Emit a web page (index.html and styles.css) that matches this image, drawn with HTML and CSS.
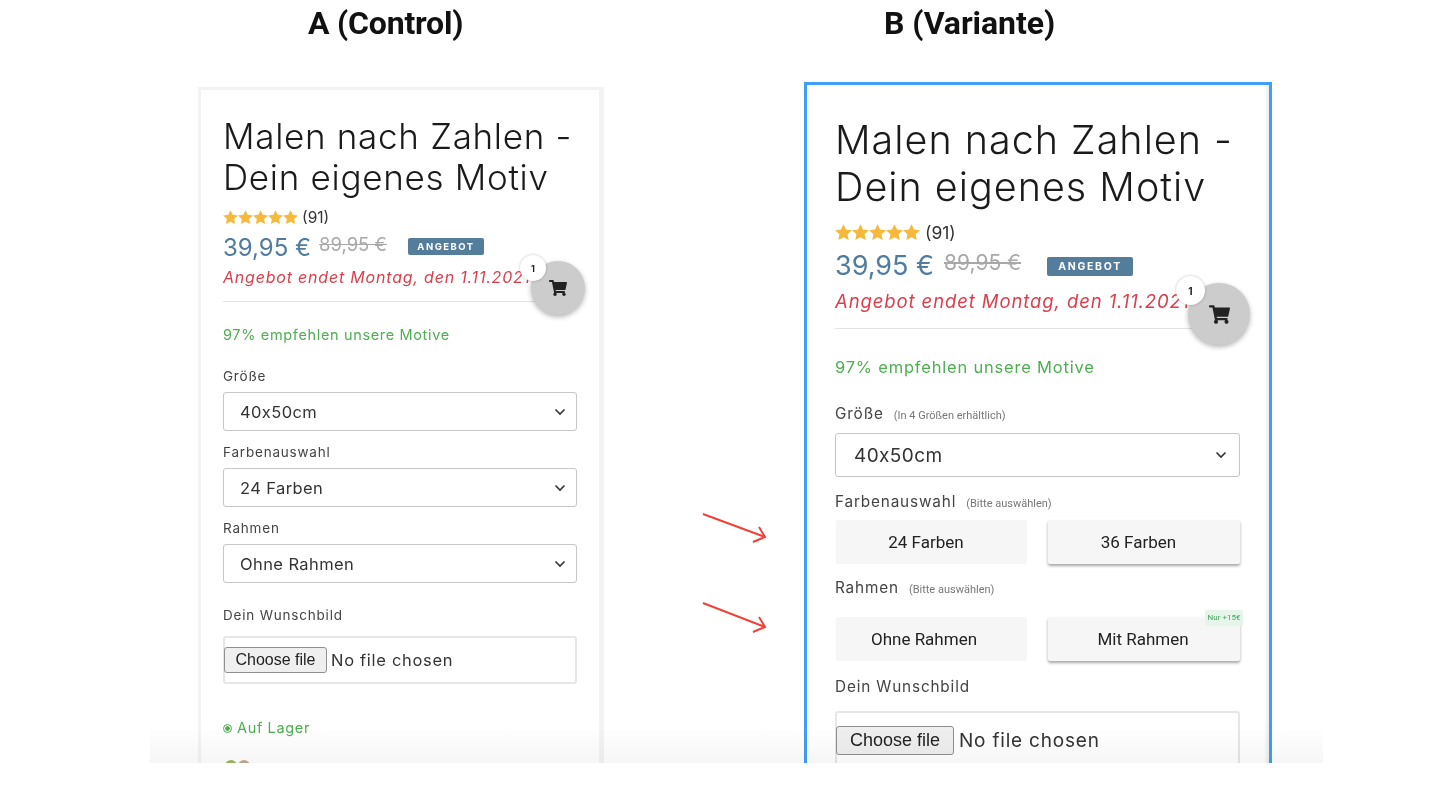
FILE: index.html
```html
<!DOCTYPE html>
<html lang="de">
<head>
    <meta charset="UTF-8">
    <meta name="viewport" content="width=device-width, initial-scale=1.0">
    <title>A/B Test - Malen nach Zahlen</title>
    <link rel="stylesheet" href="styles.css">
</head>
<body>
    <svg class="defs" width="0" height="0" aria-hidden="true">
        <symbol id="star" viewBox="0 0 24 24">
            <path d="M12 .5l3.600 7.200 8.200 1.100-6 5.600 1.500 8.100L12 18.600l-7.300 3.900 1.500-8.100-6-5.600 8.200-1.100z"/>
        </symbol>
        <symbol id="cart" viewBox="0 0 576 512">
            <path d="M528.12 301.319l47.273-208C578.806 78.301 567.391 64 551.99 64H159.208l-9.166-44.81C147.758 8.021 137.93 0 126.529 0H24C10.745 0 0 10.745 0 24v16c0 13.255 10.745 24 24 24h69.883l70.248 343.435C147.325 417.1 136 435.222 136 456c0 30.928 25.072 56 56 56s56-25.072 56-56c0-15.674-6.447-29.835-16.824-40h209.647C430.447 426.165 424 440.326 424 456c0 30.928 25.072 56 56 56s56-25.072 56-56c0-22.172-12.888-41.332-31.579-50.405l5.517-24.276c3.413-15.018-8.002-29.319-23.403-29.319H218.117l-6.545-32h293.145c11.206 0 20.92-7.754 23.403-18.681z"/>
        </symbol>
        <symbol id="chevron" viewBox="0 0 12 8">
            <path d="M1.500 1.500L6 6l4.500-4.500" fill="none" stroke="#333" stroke-width="1.600"/>
        </symbol>
    </svg>

    <main class="board">
        <header class="titles">
            <h2 class="title title-a">A (Control)</h2>
            <h2 class="title title-b">B (Variante)</h2>
        </header>

        <div class="columns">
            <!-- Control -->
            <section class="panel panel-a">
                <h1>Malen nach Zahlen - Dein eigenes Motiv</h1>
                <div class="rating">
                    <span class="stars">
                        <svg><use href="#star"/></svg><svg><use href="#star"/></svg><svg><use href="#star"/></svg><svg><use href="#star"/></svg><svg><use href="#star"/></svg>
                    </span>
                    <span class="count">(91)</span>
                </div>
                <div class="price-row">
                    <span class="price">39,95 €</span>
                    <span class="old-price">89,95 €</span>
                    <span class="badge">ANGEBOT</span>
                </div>
                <p class="offer">Angebot endet Montag, den 1.11.2021</p>
                <hr>
                <p class="recommend">97% empfehlen unsere Motive</p>

                <label class="field-label first-label">Größe</label>
                <div class="select-wrap">
                    <select><option>40x50cm</option></select>
                    <svg class="chevron"><use href="#chevron"/></svg>
                </div>
                <label class="field-label">Farbenauswahl</label>
                <div class="select-wrap">
                    <select><option>24 Farben</option></select>
                    <svg class="chevron"><use href="#chevron"/></svg>
                </div>
                <label class="field-label">Rahmen</label>
                <div class="select-wrap">
                    <select><option>Ohne Rahmen</option></select>
                    <svg class="chevron"><use href="#chevron"/></svg>
                </div>
                <label class="field-label upload-label">Dein Wunschbild</label>
                <div class="file-box">
                    <button type="button" class="file-btn">Choose file</button>
                    <span class="file-name">No file chosen</span>
                </div>

                <p class="stock"><span class="stock-dot"></span>Auf Lager</p>
                <div class="seals"><span class="seal seal-green"></span><span class="seal seal-brown"></span></div>

                <div class="fab">
                    <svg><use href="#cart"/></svg>
                    <span class="fab-count">1</span>
                </div>
            </section>

            <!-- Variante -->
            <section class="panel panel-b">
                <h1>Malen nach Zahlen - Dein eigenes Motiv</h1>
                <div class="rating">
                    <span class="stars">
                        <svg><use href="#star"/></svg><svg><use href="#star"/></svg><svg><use href="#star"/></svg><svg><use href="#star"/></svg><svg><use href="#star"/></svg>
                    </span>
                    <span class="count">(91)</span>
                </div>
                <div class="price-row">
                    <span class="price">39,95 €</span>
                    <span class="old-price">89,95 €</span>
                    <span class="badge">ANGEBOT</span>
                </div>
                <p class="offer">Angebot endet Montag, den 1.11.2021</p>
                <hr>
                <p class="recommend">97% empfehlen unsere Motive</p>

                <label class="field-label first-label">Größe <small>(In 4 Größen erhältlich)</small></label>
                <div class="select-wrap">
                    <select><option>40x50cm</option></select>
                    <svg class="chevron"><use href="#chevron"/></svg>
                </div>
                <label class="field-label">Farbenauswahl <small>(Bitte auswählen)</small></label>
                <div class="choices">
                    <button type="button" class="choice flat">24 Farben</button>
                    <button type="button" class="choice raised">36 Farben</button>
                </div>
                <label class="field-label frame-label">Rahmen <small>(Bitte auswählen)</small></label>
                <div class="choices frame-choices">
                    <button type="button" class="choice flat">Ohne Rahmen</button>
                    <button type="button" class="choice raised wide-text">Mit Rahmen<span class="surcharge">Nur +15€</span></button>
                </div>
                <label class="field-label upload-label">Dein Wunschbild</label>
                <div class="file-box">
                    <button type="button" class="file-btn">Choose file</button>
                    <span class="file-name">No file chosen</span>
                </div>

                <div class="fab">
                    <svg><use href="#cart"/></svg>
                    <span class="fab-count">1</span>
                </div>
            </section>
        </div>

        <svg class="arrow arrow-top" viewBox="0 0 66 36"><path d="M1 1l62 23M57 14l6 10-12 5"/></svg>
        <svg class="arrow arrow-bottom" viewBox="0 0 66 36"><path d="M1 1l62 24M57 15l6 10-12 5"/></svg>
        <div class="fade"></div>
    </main>
</body>
</html>
```

FILE: styles.css
```css
* {
    box-sizing: border-box;
}
body {
    margin: 0;
    background: #ffffff;
    font-family: Inter, "Open Sans", sans-serif;
    color: #333333;
}
.defs {
    position: absolute;
}
.board {
    position: relative;
    width: 1173px;
    height: 763px;
    margin-left: 150px;
    overflow: hidden;
}
.titles {
    display: flex;
    height: 82px;
}
.title {
    margin: 5px 0 0;
    font-family: Roboto, "Liberation Sans", sans-serif;
    font-size: 32px;
    line-height: 36px;
    font-weight: 700;
    color: #111111;
    letter-spacing: -0.2px;
    white-space: nowrap;
}
.title-a {
    margin-left: 158px;
    width: 576px;
}
.title-b {
    letter-spacing: -0.05px;
}
.columns {
    display: flex;
    align-items: flex-start;
    padding-left: 48px;
}
.panel {
    position: relative;
    flex: none;
    background: #ffffff;
    filter: blur(0.4px);
}
.panel p {
    margin: 0;
}
.panel h1 {
    margin: 0;
    font-weight: 300;
    color: #1a1a1a;
}
.rating,
.price-row,
.stars {
    display: flex;
    align-items: center;
}
.stars svg {
    fill: #f6b93b;
}
.price {
    color: #4f7c9f;
}
.old-price {
    color: #a8a8a8;
    text-decoration: line-through;
}
.badge {
    display: flex;
    align-items: center;
    justify-content: center;
    background: #547d9b;
    color: #ffffff;
    font-weight: 700;
    border-radius: 2px;
}
.offer {
    color: #d9404e;
    font-style: italic;
    white-space: nowrap;
}
.panel hr {
    border: none;
    height: 1px;
    margin-left: 0;
    background: #e2e2e2;
}
.recommend {
    color: #4caf50;
}
.field-label {
    display: flex;
    align-items: baseline;
    color: #444444;
}
.field-label small {
    font-family: Roboto, sans-serif;
    color: #777777;
}
.select-wrap {
    position: relative;
}
.select-wrap select {
    display: block;
    width: 100%;
    height: 100%;
    appearance: none;
    background: #ffffff;
    border: 1.500px solid #c6c6c6;
    border-radius: 3px;
    font-family: Inter, sans-serif;
    color: #333333;
}
.chevron {
    position: absolute;
    top: 50%;
    width: 12px;
    height: 8px;
    margin-top: -4px;
}
.file-box {
    display: flex;
    align-items: center;
    border: 2px solid #e6e6e6;
    border-radius: 3px;
}
.file-btn {
    flex: none;
    margin-left: -1px;
    padding: 0;
    font-family: "Liberation Sans", sans-serif;
    background: #efefef;
    border: 1px solid #8f8f8f;
    border-radius: 3px;
    color: #222222;
}
.file-name {
    color: #333333;
    white-space: nowrap;
}
.fab {
    position: absolute;
    display: flex;
    align-items: center;
    justify-content: center;
    border-radius: 50%;
    background: #cccccc;
    box-shadow: 0 2px 5px rgba(0, 0, 0, 0.3);
}
.fab svg {
    fill: #222222;
}
.fab-count {
    position: absolute;
    display: flex;
    align-items: center;
    justify-content: center;
    border-radius: 50%;
    background: #ffffff;
    color: #222222;
    font-weight: 700;
    box-shadow: 0 0 3px rgba(0, 0, 0, 0.25);
}

/* A */
.panel-a {
    width: 406px;
    height: 690px;
    margin-top: 5px;
    padding: 26px 27px 0 22px;
    border: 3px solid #f3f3f3;
    border-right-width: 5px;
}
.panel-a h1 {
    width: 360px;
    font-size: 35px;
    line-height: 41px;
    letter-spacing: 0.7px;
}
.panel-a .rating {
    height: 24px;
    margin-top: 7px;
    font-size: 15.5px;
}
.panel-a .stars svg {
    width: 15px;
    height: 15px;
}
.panel-a .count {
    margin-left: 4px;
}
.panel-a .price-row {
    height: 30px;
    margin-top: 3px;
}
.panel-a .price {
    font-size: 24px;
    width: 96px;
}
.panel-a .old-price {
    font-size: 18.5px;
    width: 89px;
    margin-top: -6px;
}
.panel-a .badge {
    width: 76px;
    height: 17px;
    font-size: 9.500px;
    letter-spacing: 1.500px;
    margin-top: -2px;
}
.panel-a .offer {
    margin-top: 4px;
    font-size: 16px;
    line-height: 22px;
    letter-spacing: 0.8px;
}
.panel-a hr {
    margin: 13px 0 0;
}
.panel-a .recommend {
    margin-top: 23px;
    font-size: 14.5px;
    line-height: 20px;
    letter-spacing: 0.65px;
}
.panel-a .field-label {
    height: 18px;
    margin: 12px 0 7px;
    font-size: 13.5px;
    line-height: 18px;
    letter-spacing: 0.8px;
}
.panel-a .first-label {
    margin-top: 22px;
}
.panel-a .upload-label {
    margin-top: 23px;
    margin-bottom: 12px;
}
.panel-a .select-wrap {
    height: 39px;
    width: 354px;
}
.panel-a select {
    padding-left: 16px;
    font-size: 16.5px;
    letter-spacing: 0.4px;
}
.panel-a .chevron {
    right: 11px;
}
.panel-a .file-box {
    width: 354px;
    height: 48px;
}
.panel-a .file-btn {
    width: 103px;
    height: 26px;
    font-size: 16px;
    margin-right: 4px;
}
.panel-a .file-name {
    font-size: 16.5px;
    letter-spacing: 0.7px;
}
.stock {
    margin-top: 34px !important;
    display: flex;
    align-items: center;
    color: #4caf50;
    font-size: 14.5px;
    line-height: 20px;
    letter-spacing: 0.65px;
}
.stock-dot {
    width: 9px;
    height: 9px;
    margin-right: 5px;
    border-radius: 50%;
    border: 1px solid #4caf50;
    background: radial-gradient(circle, #4caf50 0 2px, #ffffff 2.5px);
}
.seals {
    display: flex;
    gap: 1px;
    margin-top: 22px;
    margin-left: 2px;
}
.seal {
    width: 12px;
    height: 12px;
    border-radius: 50%;
}
.seal-green {
    background: #9ab860;
}
.seal-brown {
    background: #c9a78c;
}
.panel-a .fab {
    top: 171px;
    left: 330px;
    width: 54px;
    height: 54px;
}
.panel-a .fab svg {
    width: 18px;
    height: 16px;
}
.panel-a .fab-count {
    top: -6px;
    left: -11px;
    width: 26px;
    height: 26px;
    font-size: 9px;
}

/* B */
.panel-b {
    width: 468px;
    height: 690px;
    margin-left: 200px;
    padding: 31.5px 29px 0 28px;
    border: 3px solid #3f9ff5;
    box-shadow: inset -5px 0 3px -2px #eeeeee;
}
.panel-b h1 {
    width: 415px;
    font-size: 39.5px;
    line-height: 47px;
    letter-spacing: 1px;
}
.panel-b .rating {
    height: 26px;
    margin-top: 8.500px;
    font-size: 17.5px;
}
.panel-b .stars svg {
    width: 17px;
    height: 17px;
}
.panel-b .count {
    margin-left: 5px;
}
.panel-b .price-row {
    height: 32px;
    margin-top: 4px;
}
.panel-b .price {
    font-size: 27px;
    width: 109px;
}
.panel-b .old-price {
    font-size: 21px;
    width: 103px;
    margin-top: -6px;
}
.panel-b .badge {
    width: 86px;
    height: 19px;
    font-size: 10.500px;
    letter-spacing: 1.700px;
    margin-top: 2px;
}
.panel-b .offer {
    margin-top: 8px;
    font-size: 18.5px;
    line-height: 24px;
    letter-spacing: 0.9px;
}
.panel-b hr {
    margin: 15px 0 0;
    width: 405px;
}
.panel-b .recommend {
    margin-top: 27px;
    font-size: 16.5px;
    line-height: 22px;
    letter-spacing: 0.8px;
}
.panel-b .field-label {
    height: 20px;
    margin: 15px 0 8px;
    font-size: 15.300px;
    line-height: 20px;
    letter-spacing: 0.85px;
}
.panel-b .field-label small {
    margin-left: 10px;
    font-size: 11px;
    letter-spacing: 0;
}
.panel-b .first-label {
    margin-top: 26px;
    margin-bottom: 9px;
}
.panel-b .frame-label {
    margin-top: 14px;
    margin-bottom: 19px;
}
.panel-b .upload-label {
    margin-top: 16px;
    margin-bottom: 14px;
}
.panel-b .select-wrap {
    height: 44px;
    width: 405px;
}
.panel-b select {
    padding-left: 18px;
    font-size: 19px;
    letter-spacing: 0.4px;
}
.panel-b .chevron {
    right: 13px;
}
.choices {
    display: grid;
    grid-template-columns: 191px 192px;
    gap: 21px;
    width: 405px;
    padding-left: 1px;
}
.choice {
    position: relative;
    height: 44px;
    padding: 0 11px 0 0;
    border: none;
    border-radius: 2px;
    background: #f6f6f6;
    color: #222222;
    font-family: Roboto, sans-serif;
    font-size: 17px;
}
.frame-choices .flat {
    padding-right: 15px;
}
.raised {
    box-shadow: 0 2px 3px rgba(0, 0, 0, 0.35);
}
.wide-text {
    padding-right: 2px;
}
.surcharge {
    position: absolute;
    top: -7px;
    right: -3px;
    width: 38px;
    height: 16px;
    border-radius: 2px;
    background: #e6f5ea;
    color: #3aa65c;
    font-size: 8px;
    line-height: 16px;
}
.panel-b .file-box {
    width: 405px;
    height: 58px;
}
.panel-b .file-btn {
    width: 118px;
    height: 29px;
    font-size: 18px;
    margin-right: 5px;
}
.panel-b .file-name {
    font-size: 19px;
    letter-spacing: 0.8px;
}
.panel-b .fab {
    top: 198px;
    left: 381px;
    width: 62px;
    height: 62px;
}
.panel-b .fab svg {
    width: 21px;
    height: 19px;
}
.panel-b .fab-count {
    top: -7px;
    left: -12px;
    width: 29px;
    height: 29px;
    font-size: 10px;
}

/* annotations */
.arrow {
    position: absolute;
    left: 552px;
    width: 66px;
    height: 36px;
    fill: none;
    stroke: #f0403a;
    stroke-width: 2;
}
.arrow-top {
    top: 513px;
}
.arrow-bottom {
    top: 602px;
}
.fade {
    position: absolute;
    left: 0;
    right: 0;
    bottom: 0;
    height: 38px;
    background: linear-gradient(to bottom, rgba(246, 246, 246, 0), #f6f6f6);
    mix-blend-mode: multiply;
}
```
